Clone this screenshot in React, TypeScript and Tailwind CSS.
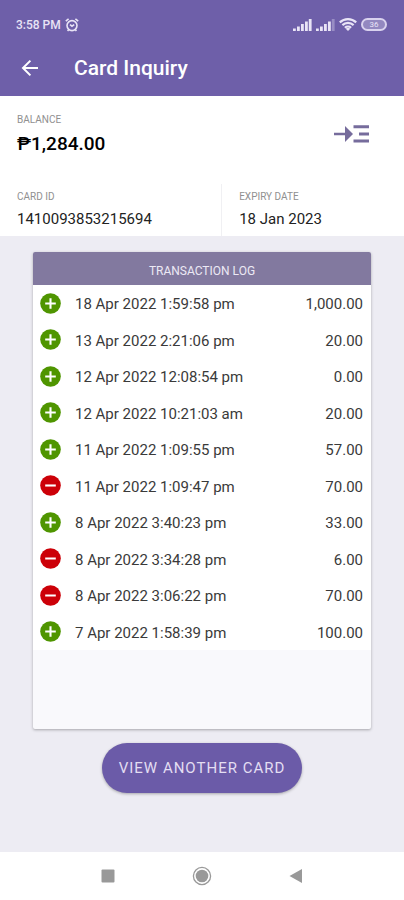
type Transaction = {
  date: string;
  amount: string;
  type: "credit" | "debit";
};

const transactions: Transaction[] = [
  { date: "18 Apr 2022 1:59:58 pm", amount: "1,000.00", type: "credit" },
  { date: "13 Apr 2022 2:21:06 pm", amount: "20.00", type: "credit" },
  { date: "12 Apr 2022 12:08:54 pm", amount: "0.00", type: "credit" },
  { date: "12 Apr 2022 10:21:03 am", amount: "20.00", type: "credit" },
  { date: "11 Apr 2022 1:09:55 pm", amount: "57.00", type: "credit" },
  { date: "11 Apr 2022 1:09:47 pm", amount: "70.00", type: "debit" },
  { date: "8 Apr 2022 3:40:23 pm", amount: "33.00", type: "credit" },
  { date: "8 Apr 2022 3:34:28 pm", amount: "6.00", type: "debit" },
  { date: "8 Apr 2022 3:06:22 pm", amount: "70.00", type: "debit" },
  { date: "7 Apr 2022 1:58:39 pm", amount: "100.00", type: "credit" },
];

const SignalIcon = ({ weak = false }: { weak?: boolean }) => (
  <svg className="w-[19px] h-3" viewBox="0 0 19 12" fill="currentColor">
    <rect x="0" y="9.5" width="2.8" height="2.5" />
    <rect x="4" y="7.5" width="2.8" height="4.5" />
    <rect x="8" y="5" width="2.8" height="7" />
    <rect x="12" y="2.5" width="2.8" height="9.5" />
    <rect x="15.8" y="0" width="2.8" height="12" opacity={weak ? 0.35 : 1} />
  </svg>
);

const TypeIcon = ({ type }: { type: Transaction["type"] }) => (
  <svg className="block w-[21px] h-[21px]" viewBox="0 0 21 21" role="img" aria-label={type}>
    <circle cx="10.5" cy="10.5" r="10.3" fill={type === "credit" ? "#4f9500" : "#cc0008"} />
    <path
      d={type === "credit" ? "M5.2 10.5h10.6M10.5 5.2v10.6" : "M5.2 10.5h10.6"}
      stroke="#fff"
      strokeWidth="2.1"
    />
  </svg>
);

const StatusBar = () => (
  <div className="flex items-center justify-between h-[49px] pl-4 pr-[17px] text-[#e9e4f6]">
    <div className="flex items-center gap-1">
      <span className="text-xs font-medium">3:58 PM</span>
      <svg className="w-3.5 h-3.5" viewBox="0 0 14 14" fill="none" stroke="currentColor" strokeWidth="1.6">
        <circle cx="7" cy="7.6" r="5" />
        <path d="M.8 3.2 3.6.9M13.2 3.2 10.4.9M2.6 12.9l1-1.2M11.4 12.9l-1-1.2M5 6.6l2 1.6 2.2-1.6" />
      </svg>
    </div>
    <div className="flex items-center gap-1">
      <SignalIcon />
      <SignalIcon weak />
      <svg className="w-[18px] h-[13px]" viewBox="0 0 18 13" fill="none" stroke="currentColor" strokeWidth="2.2">
        <path d="M.8 4.4a12 12 0 0 1 16.4 0M3.4 7.1a8.2 8.2 0 0 1 11.2 0M5.9 9.7a4.6 4.6 0 0 1 6.2 0" />
        <path d="M9 13 6.7 10.7a3.4 3.4 0 0 1 4.6 0z" fill="currentColor" stroke="none" />
      </svg>
      <span className="flex items-center justify-center w-[26px] h-[13px] rounded-full border-2 border-[#d9d2ee] bg-[#9388c0] text-[8px] leading-none">
        36
      </span>
    </div>
  </div>
);

const TopBar = () => (
  <div className="flex items-center gap-8 h-[47px] pl-[18px] pb-2 text-white">
    <button type="button" aria-label="Back" className="flex items-center justify-center w-6 h-6">
      <svg className="w-6 h-6" viewBox="0 0 24 24" fill="none" stroke="currentColor" strokeWidth="2">
        <path d="M20 11H5M12.4 3.6 5 11l7.4 7.4" />
      </svg>
    </button>
    <h1 className="text-[21px] font-medium">Card Inquiry</h1>
  </div>
);

const CardDetails = () => (
  <section className="bg-white">
    <div className="flex items-start justify-between h-[88px] pl-[17px] pr-[34px] pt-4">
      <div>
        <p className="text-[10px] leading-4 text-[#909090]">BALANCE</p>
        <p className="text-[19px] leading-8 font-medium text-black">₱1,284.00</p>
      </div>
      <button type="button" aria-label="Show details" className="pt-3 text-[#766c9c]">
        <svg className="w-9 h-5" viewBox="0 0 36 20" fill="currentColor">
          <path d="M0 8.7h11V2l8 8-8 8v-6.7H0z" />
          <path d="M19.5 1.3H35v3H19.5zM25 8.5h10v3H25zM19.5 15.5H35v3H19.5z" />
        </svg>
      </button>
    </div>
    <div className="flex h-[52px]">
      <div className="w-[55%] pl-[17px] pt-[5px] border-r border-[#f0f0f3]">
        <p className="text-[10px] leading-4 text-[#909090]">CARD ID</p>
        <p className="text-[15px] leading-7 text-[#222]">1410093853215694</p>
      </div>
      <div className="flex-1 pl-[17px] pt-[5px]">
        <p className="text-[10px] leading-4 text-[#909090]">EXPIRY DATE</p>
        <p className="text-[15px] leading-7 text-[#222]">18 Jan 2023</p>
      </div>
    </div>
  </section>
);

const TransactionLog = () => (
  <section className="flex-1 mx-[33px] mt-4 rounded-xs overflow-hidden bg-[#f9f9fc] shadow-[0_1px_3px_rgba(0,0,0,0.3)]">
    <h2 className="flex items-center justify-center h-[33px] pt-1 bg-[#82799f] text-xs text-[#ece9f5]">
      TRANSACTION LOG
    </h2>
    <table className="w-full h-[365px] bg-white text-[15px] text-[#3a3a3a]">
      <tbody>
        {transactions.map((item) => (
          <tr key={item.date}>
            <td className="w-9 pl-[7px]">
              <TypeIcon type={item.type} />
            </td>
            <td className="pl-[6px] pt-0.5">{item.date}</td>
            <td className="pr-2 pt-0.5 text-right">{item.amount}</td>
          </tr>
        ))}
      </tbody>
    </table>
  </section>
);

const NavigationBar = () => (
  <nav className="flex items-center justify-center gap-[77px] h-12 bg-white text-[#999]">
    <button type="button" aria-label="Recent apps">
      <svg className="w-3.5 h-3.5" viewBox="0 0 14 14" fill="currentColor">
        <rect x=".5" y=".5" width="13" height="13" rx="1" />
      </svg>
    </button>
    <button type="button" aria-label="Home">
      <svg className="w-5 h-5" viewBox="0 0 20 20" fill="currentColor">
        <circle cx="10" cy="10" r="8.6" fill="none" stroke="currentColor" strokeWidth="1.3" />
        <circle cx="10" cy="10" r="6.3" />
      </svg>
    </button>
    <button type="button" aria-label="Back">
      <svg className="w-3.5 h-3.5" viewBox="0 0 14 14" fill="currentColor">
        <path d="M.5 7 13 0v14z" />
      </svg>
    </button>
  </nav>
);

const App = () => {
  return (
    <div className="flex flex-col min-h-screen bg-[#edecf3] font-[Roboto,sans-serif]">
      <header className="bg-[#6e5fa9]">
        <StatusBar />
        <TopBar />
      </header>

      <main className="flex flex-1 flex-col">
        <CardDetails />
        <TransactionLog />
        <div className="flex justify-center pt-3.5 pb-[59px]">
          <button
            type="button"
            className="h-[50px] px-[17px] rounded-full bg-[#6b5ba8] text-[15px] tracking-[1px] text-[#e3def2] shadow-[0_1px_3px_rgba(0,0,0,0.3)]"
          >
            VIEW ANOTHER CARD
          </button>
        </div>
      </main>

      <NavigationBar />
    </div>
  );
};

export default App;
